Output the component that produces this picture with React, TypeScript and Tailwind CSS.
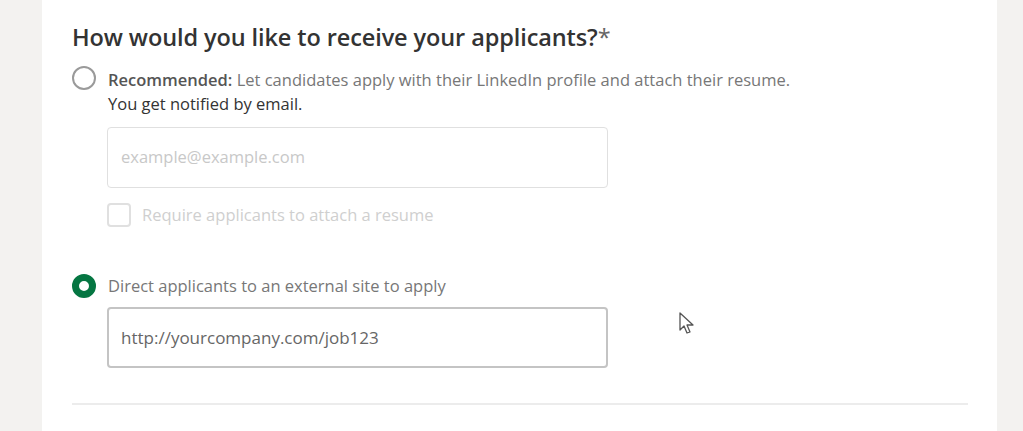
import { useState } from "react";

export default function App() {
  const [choice, setChoice] = useState<"linkedin" | "external">("external");

  return (
    <div
      className="w-[1023px] h-[431px] overflow-hidden bg-[#f3f2f0] flex"
      style={{ fontFamily: '"Open Sans", "Noto Sans", sans-serif' }}
    >
      <div className="ml-[42px] w-[955px] h-full bg-white pl-[30px] pr-[29px] pt-[20px] relative">
        <h2 className="text-[23.5px] leading-[34px] font-semibold text-[#333] tracking-[-0.1px]">
          How would you like to receive your applicants?
          <span className="font-normal text-[#666]">*</span>
        </h2>

        <div className="mt-[12px] flex gap-[12px]">
          <button
            onClick={() => setChoice("linkedin")}
            className={`w-[24px] h-[24px] rounded-full shrink-0 ${
              choice === "linkedin"
                ? "border-[7px] border-[#057642]"
                : "border-2 border-[#9a9a9a]"
            }`}
          />
          <div className="mt-[2px]">
            <p className="text-[16.5px] leading-[24px] text-[#777]">
              <span className="font-semibold text-[#555]">Recommended:</span>{" "}
              Let candidates apply with their LinkedIn profile and attach their
              resume.
            </p>
            <p className="text-[16.5px] leading-[24px] text-[#333]">
              You get notified by email.
            </p>
          </div>
        </div>

        <div className="ml-[35px] mt-[11px] w-[501px]">
          <div className="h-[61px] border border-[#e0e0e0] rounded-[4px] flex items-center px-[13px] text-[16.5px] text-[#c8c8c8]">
            example@example.com
          </div>
          <div className="mt-[15px] flex items-center gap-[11px]">
            <div className="w-[24px] h-[24px] border-2 border-[#e0e0e0] rounded-[4px]" />
            <span className="text-[16.5px] leading-[24px] text-[#cfcfcf]">
              Require applicants to attach a resume
            </span>
          </div>
        </div>

        <div className="mt-[47px] flex items-center gap-[12px]">
          <button
            onClick={() => setChoice("external")}
            className={`w-[24px] h-[24px] rounded-full shrink-0 ${
              choice === "external"
                ? "border-[7px] border-[#057642]"
                : "border-2 border-[#9a9a9a]"
            }`}
          />
          <span className="text-[16.5px] leading-[24px] text-[#777]">
            Direct applicants to an external site to apply
          </span>
        </div>

        <div className="ml-[35px] mt-[9px] w-[501px] h-[61px] border-2 border-[#c4c4c4] rounded-[4px] flex items-center px-[12px] text-[17px] text-[#666]">
          http://yourcompany.com/job123
        </div>

        <div className="mt-[35px] h-[2px] bg-[#ececec]" />

        <svg
          className="absolute left-[636px] top-[311px]"
          width="20"
          height="26"
          viewBox="0 0 20 26"
        >
          <path
            d="M2 2 L2 19 L6 15 L9 22 L12 21 L9 14 L15 14 Z"
            fill="white"
            stroke="#555"
            strokeWidth="1.3"
            strokeLinejoin="round"
          />
        </svg>
      </div>
    </div>
  );
}
